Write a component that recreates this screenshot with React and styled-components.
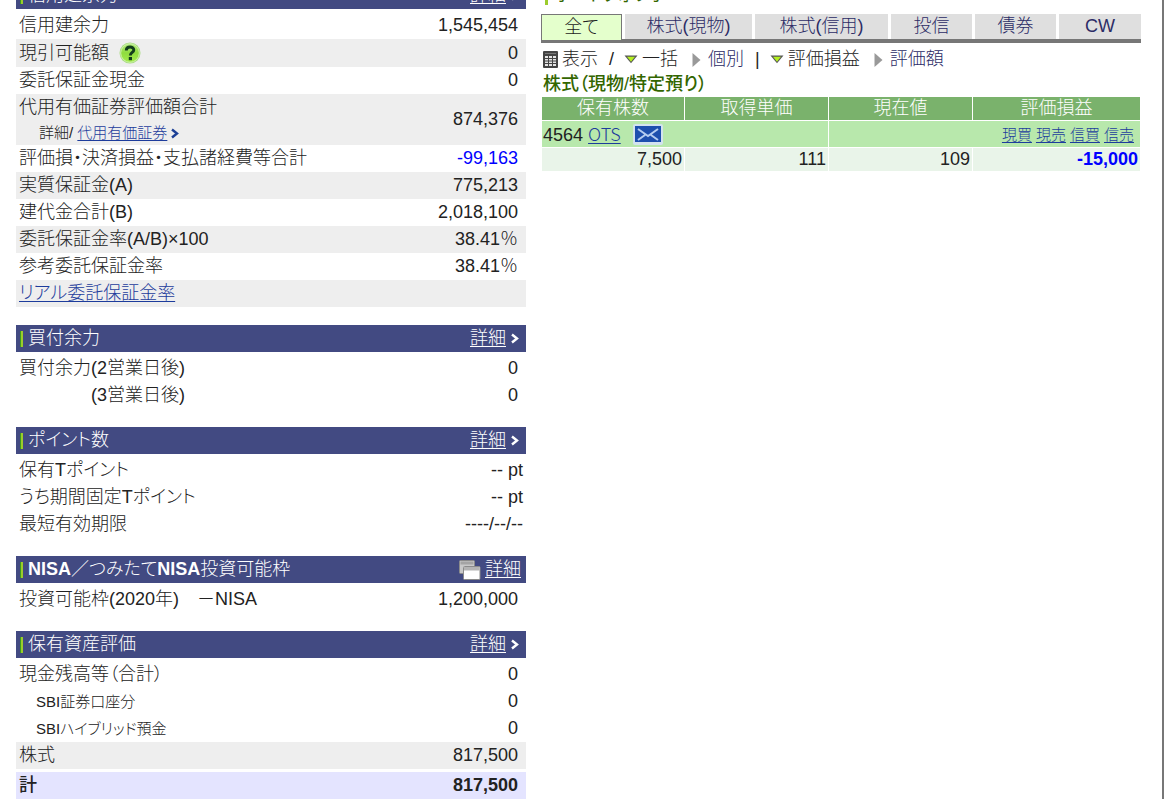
import React from "react";
import styled, {createGlobalStyle} from "styled-components";

const marginRows = [
    {label: "信用建余力", value: "1,545,454"},
    {label: "現引可能額", value: "0", help: true, shade: true},
    {label: "委託保証金現金", value: "0"},
    {label: "代用有価証券評価額合計", value: "874,376", sub: true, shade: true},
    {label: "評価損・決済損益・支払諸経費等合計", value: "-99,163", loss: true},
    {label: "実質保証金(A)", value: "775,213", shade: true},
    {label: "建代金合計(B)", value: "2,018,100"},
    {label: "委託保証金率(A/B)×100", value: "38.41％", shade: true},
    {label: "参考委託保証金率", value: "38.41％"},
    {label: "リアル委託保証金率", value: "", link: true, shade: true},
];
const buyingRows = [
    {label: "買付余力(2営業日後)", value: "0"},
    {label: "　　　　(3営業日後)", value: "0"},
];
const pointRows = [
    {label: "保有Tポイント", value: "-- pt", wide: true},
    {label: "うち期間固定Tポイント", value: "-- pt", wide: true},
    {label: "最短有効期限", value: "----/--/--", wide: true},
];
const nisaRows = [
    {label: "投資可能枠(2020年)　－NISA", value: "1,200,000"},
];
const assetRows = [
    {label: "現金残高等（合計）", value: "0"},
    {label: "SBI証券口座分", value: "0", indent: true},
    {label: "SBIハイブリッド預金", value: "0", indent: true},
    {label: "株式", value: "817,500", shade: true},
    {label: "計", value: "817,500", total: true},
];
const tabs = ["全て", "株式(現物)", "株式(信用)", "投信", "債券", "CW"];
const trades = ["現買", "現売", "信買", "信売"];

const Chevron = ({color}) => (
    <ChevronSvg width="8" height="11" viewBox="0 0 8 11">
        <path d="M1 1.5L6 5.5L1 9.5" fill="none" stroke={color} strokeWidth="2.4"/>
    </ChevronSvg>
);

const HelpIcon = () => (
    <svg width="22" height="22" viewBox="0 0 22 22">
        <defs>
            <linearGradient id="helpFill" x1="0" y1="0" x2="0" y2="1">
                <stop offset="0" stopColor="#b4ec7c"/>
                <stop offset="0.5" stopColor="#8fdc3e"/>
                <stop offset="1" stopColor="#a4ec4c"/>
            </linearGradient>
        </defs>
        <circle cx="11" cy="11" r="10.5" fill="#a8dc80"/>
        <circle cx="11" cy="11" r="9.3" fill="url(#helpFill)" stroke="#d6f5b8" strokeWidth="0.8"/>
        <path d="M7.3 8.4C7.3 4 14.8 4 14.8 8C14.8 10.6 11.3 10.4 11.3 13.6" fill="none" stroke="#123c1c" strokeWidth="2.9"/>
        <rect x="9.8" y="15" width="3.2" height="3.2" fill="#123c1c"/>
    </svg>
);

const WindowsIcon = () => (
    <svg width="22" height="20" viewBox="0 0 22 20">
        <rect x="0.5" y="0.5" width="15" height="13" rx="1" fill="#c9c9c9" stroke="#8b8b8b"/>
        <rect x="1.5" y="1.5" width="13" height="3" fill="#a4a4a4"/>
        <rect x="4.5" y="6.5" width="16.5" height="13" rx="1" fill="#fff" stroke="#8b8b8b"/>
        <rect x="5" y="7" width="15.5" height="3.5" fill="#b4b4b4"/>
    </svg>
);

const SheetIcon = () => (
    <svg width="15" height="17" viewBox="0 0 15 17">
        <rect width="15" height="17" rx="1" fill="#444"/>
        <path d="M2 2.5H13" stroke="#777"/>
        <path d="M2 5H5V7H2ZM6 5H9V7H6ZM10 5H13V7H10ZM2 8H5V9.5H2ZM6 8H9V9.5H6ZM10 8H13V9.5H10ZM2 10.5H5V12H2ZM6 10.5H9V12H6ZM10 10.5H13V12H10ZM2 13H5V15H2ZM6 13H9V15H6ZM10 13H13V15H10Z" fill="#e4e4e4"/>
    </svg>
);

const DownIcon = () => (
    <svg width="14" height="9" viewBox="0 0 14 9">
        <path d="M0.5 0.5H13.5L7 8.3Z" fill="#555"/>
        <path d="M3 1.8H11L7 6.8Z" fill="#b4f020"/>
    </svg>
);

const RightIcon = () => (
    <svg width="9" height="14" viewBox="0 0 9 14">
        <path d="M0.5 0L8.5 7L0.5 14Z" fill="#999"/>
    </svg>
);

const MailIcon = () => (
    <svg width="30" height="21" viewBox="0 0 30 21">
        <rect width="30" height="21" rx="2" fill="#d3e3ee"/>
        <rect x="2" y="2" width="26" height="16" fill="#1d4fae"/>
        <path d="M5 5L15 12L25 5M5 16L12 11M25 16L18 11" fill="none" stroke="#b4ccf0" strokeWidth="2"/>
    </svg>
);

const Panel = ({title, rows, popup}) => (
    <PanelBox>
        <PanelHead>
            <PanelTitle>{title}</PanelTitle>
            {popup ? <WindowsIcon/> : null}
            <DetailLink href="#" $popup={popup}>詳細</DetailLink>
            {popup ? null : <Chevron color="#fff"/>}
        </PanelHead>
        <Summary>
            <tbody>
                {rows.map((row) => (
                    <SummaryRow key={row.label} $shade={row.shade} $total={row.total}>
                        <Label scope="row" $indent={row.indent}>
                            <LabelLine $tall={row.help}>
                                {row.link ? <TextLink href="#">{row.label}</TextLink> : row.label}
                                {row.help ? <HelpButton aria-label="ヘルプ"><HelpIcon/></HelpButton> : null}
                            </LabelLine>
                            {row.sub ? <SubLine>詳細/ <TextLink href="#">代用有価証券</TextLink><SubArrow><Chevron color="#1d4096"/></SubArrow></SubLine> : null}
                        </Label>
                        <Value $loss={row.loss} $wide={row.wide}>{row.value}</Value>
                    </SummaryRow>
                ))}
            </tbody>
        </Summary>
    </PanelBox>
);

const Portfolio = () => (
    <section>
        <PortfolioTitle>ポートフォリオ</PortfolioTitle>
        <Tabs>
            {tabs.map((tab, i) => <Tab key={tab} $active={i === 0}>{tab}</Tab>)}
        </Tabs>
        <ViewBar>
            <SheetIcon/>
            <ViewText>表示</ViewText>
            <Divider>/</Divider>
            <DownIcon/>
            <ViewText>一括</ViewText>
            <ViewOption><RightIcon/><ViewLink href="#">個別</ViewLink></ViewOption>
            <Divider>|</Divider>
            <DownIcon/>
            <ViewText>評価損益</ViewText>
            <ViewOption><RightIcon/><ViewLink href="#">評価額</ViewLink></ViewOption>
        </ViewBar>
        <GroupTitle>株式（現物/特定預り）</GroupTitle>
        <Holdings>
            <colgroup>
                <Col $share={142}/>
                <Col $share={143}/>
                <Col $share={143}/>
                <Col $share={167}/>
            </colgroup>
            <thead>
                <tr>
                    <HeadCell>保有株数</HeadCell>
                    <HeadCell>取得単価</HeadCell>
                    <HeadCell>現在値</HeadCell>
                    <HeadCell>評価損益</HeadCell>
                </tr>
            </thead>
            <tbody>
                <tr>
                    <StockCell colSpan="2">
                        <Stock>
                            <span>4564 <Ticker href="#">OTS</Ticker></span>
                            <MailButton aria-label="メール"><MailIcon/></MailButton>
                        </Stock>
                    </StockCell>
                    <StockCell colSpan="2">
                        <Trades>{trades.map((trade) => <TextLink key={trade} href="#">{trade}</TextLink>)}</Trades>
                    </StockCell>
                </tr>
                <tr>
                    <NumberCell>7,500</NumberCell>
                    <NumberCell>111</NumberCell>
                    <NumberCell>109</NumberCell>
                    <NumberCell $loss>-15,000</NumberCell>
                </tr>
            </tbody>
        </Holdings>
    </section>
);

const App = () => (
    <>
        <GlobalStyle/>
        <Viewport>
            <Page>
                <div>
                    <Panel title="信用建余力" rows={marginRows}/>
                    <Panel title="買付余力" rows={buyingRows}/>
                    <Panel title="ポイント数" rows={pointRows}/>
                    <Panel title={<><b>NISA</b>／つみたて<b>NISA</b>投資可能枠</>} rows={nisaRows} popup/>
                    <Panel title="保有資産評価" rows={assetRows}/>
                </div>
                <Portfolio/>
            </Page>
        </Viewport>
    </>
);

const GlobalStyle = createGlobalStyle`
    * {
        box-sizing: border-box;
    }
    body {
        margin: 0;
        background: #fff;
        color: #222;
        font-family: "Liberation Sans", "Noto Sans CJK JP", sans-serif;
        font-size: 18px;
        font-weight: 300;
        line-height: 27px;
        font-feature-settings: "palt";
    }
    button {
        font: inherit;
        font-feature-settings: inherit;
        border: none;
        padding: 0;
        background: none;
        cursor: pointer;
    }
    b {
        font-weight: 700;
    }
    svg {
        display: block;
        flex: none;
    }
`;
const Viewport = styled.div`
    height: 100vh;
    overflow: hidden;
`;
/* scrolled by most of the first heading */
const Page = styled.main`
    display: grid;
    grid-template-columns: 17fr 20fr;
    column-gap: 15px;
    margin: -18px 5px 0 16px;
    padding-right: 21px;
    border-right: 2px solid #777;
    min-height: calc(100vh + 18px);
`;
const PanelBox = styled.section`
    margin-bottom: 18px;
`;
const PanelHead = styled.div`
    display: flex;
    align-items: center;
    height: 27px;
    margin-bottom: 3px;
    padding: 0 5px 0 4px;
    background: #424a82;
    color: #fff;
`;
const PanelTitle = styled.h2`
    display: flex;
    align-items: center;
    flex: 1;
    margin: 0;
    font-size: 18px;
    font-weight: 300;
    &::before {
        content: "";
        width: 3px;
        height: 16px;
        margin-right: 5px;
        background: linear-gradient(90deg, #3c9c1c 1px, #9ccc2c 1px);
    }
`;
const DetailLink = styled.a`
    color: #fff;
    margin: ${({$popup}) => ($popup ? "0 0 0 4px" : "0 5px 0 0")};
    text-underline-offset: 2px;
`;
const ChevronSvg = styled.svg`
    margin-right: 2px;
`;
const Summary = styled.table`
    width: 100%;
    border-spacing: 0;
`;
const SummaryRow = styled.tr`
    background: ${({$shade, $total}) => ($total ? "#e4e4ff" : $shade ? "#eee" : "#fff")};
    & > * {
        border-top: ${({$total}) => ($total ? "3px solid #fff" : "none")};
        font-weight: 300;
    }
    & > th {
        font-weight: ${({$total}) => ($total ? "500" : "300")};
    }
    & > td {
        font-weight: ${({$total}) => ($total ? "bold" : "300")};
    }
`;
const Label = styled.th`
    padding: 0 0 0 ${({$indent}) => ($indent ? 20 : 3)}px;
    text-align: left;
    font-size: ${({$indent}) => ($indent ? 15 : 18)}px;
    white-space: pre;
`;
const LabelLine = styled.div`
    display: flex;
    align-items: center;
    height: ${({$tall}) => ($tall ? 28 : 27)}px;
`;
const HelpButton = styled.button`
    margin-left: 10px;
`;
const SubLine = styled.div`
    display: flex;
    align-items: center;
    padding-left: 20px;
    font-size: 15px;
    line-height: 24px;
`;
const SubArrow = styled.span`
    margin-left: 4px;
`;
const Value = styled.td`
    padding: 0 ${({$wide}) => ($wide ? 3 : 8)}px 0 0;
    text-align: right;
    color: ${({$loss}) => ($loss ? "#00f" : "inherit")};
`;
const TextLink = styled.a`
    color: #1d3c9c;
    text-underline-offset: 2px;
`;
const PortfolioTitle = styled.h1`
    display: flex;
    align-items: center;
    height: 27px;
    margin: 0 0 5px;
    padding-left: 4px;
    font-size: 18px;
    font-weight: 400;
    color: #360;
    &::before {
        content: "";
        width: 3px;
        height: 18px;
        margin-right: 6px;
        background: #9ccc2c;
    }
`;
const Tabs = styled.div`
    display: grid;
    grid-template-columns: 81fr 127fr 133fr 81fr 81fr 82fr;
    column-gap: 3px;
    height: 29px;
    border-bottom: 4px solid #777;
`;
const Tab = styled.button`
    height: ${({$active}) => ($active ? 27 : 25)}px;
    line-height: 25px;
    border: ${({$active}) => ($active ? "1px solid #777" : "none")};
    background: ${({$active}) => ($active ? "#e4ffcc" : "#dfdfdf")};
    color: ${({$active}) => ($active ? "#222" : "#2c2c66")};
`;
const ViewBar = styled.div`
    display: flex;
    align-items: center;
    height: 27px;
    margin-top: 3px;
    padding-left: 2px;
`;
const ViewText = styled.span`
    margin-left: 4px;
`;
const ViewOption = styled.span`
    display: flex;
    align-items: center;
    gap: 7px;
    margin-left: 14px;
`;
const ViewLink = styled.a`
    color: #2c2c66;
    text-decoration: none;
`;
const Divider = styled.span`
    margin: 0 10px 0 11px;
`;
const GroupTitle = styled.h2`
    margin: 0;
    padding-left: 2px;
    font-size: 18px;
    line-height: 23px;
    font-weight: 500;
    color: #360;
`;
const Holdings = styled.table`
    width: 100%;
    table-layout: fixed;
    border-spacing: 1px;
    line-height: 23px;
`;
const Col = styled.col`
    width: calc(100% * ${({$share}) => $share} / 595);
`;
const HeadCell = styled.th`
    padding: 0;
    background: #7ab26c;
    color: #fff;
    font-weight: 300;
`;
const StockCell = styled.td`
    height: 26px;
    padding: 0 6px 0 1px;
    background: #b8e8ac;
`;
const Stock = styled.div`
    display: flex;
    align-items: center;
    gap: 12px;
`;
const Ticker = styled.a`
    color: #1d3c9c;
    font-family: "Noto Sans CJK JP", sans-serif;
    text-underline-offset: 2px;
`;
const MailButton = styled.button`
    flex: none;
`;
const Trades = styled.div`
    display: flex;
    justify-content: flex-end;
    gap: 4px;
    font-size: 15px;
`;
const NumberCell = styled.td`
    padding: 0 2px;
    background: #e9f4e9;
    text-align: right;
    color: ${({$loss}) => ($loss ? "#00f" : "inherit")};
    font-weight: ${({$loss}) => ($loss ? "bold" : "inherit")};
`;

export default App;
